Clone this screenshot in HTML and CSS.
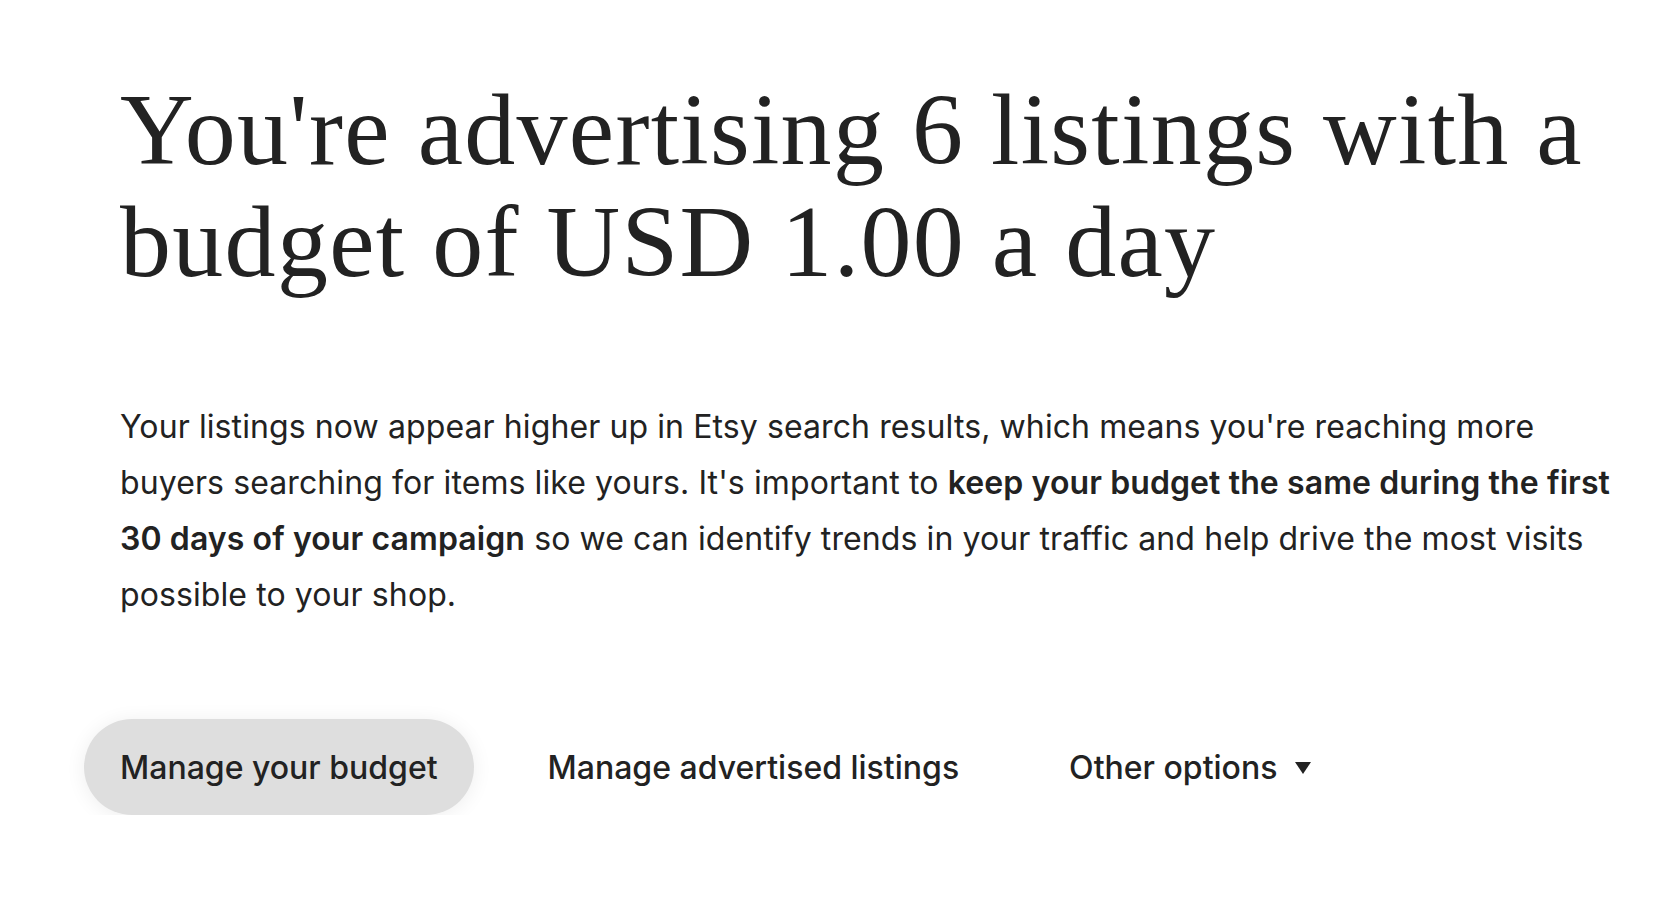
FILE: index.html
```html
<!DOCTYPE html>
<html lang="en">
<head>
<meta charset="utf-8">
<title>Advertising</title>
<link rel="stylesheet" href="styles.css">
</head>
<body>
<main class="page">
  <h1 class="title">You're advertising 6 listings with a budget of USD 1.00 a day</h1>
  <p class="intro">Your listings now appear higher up in Etsy search results, which means you're reaching more buyers searching for items like yours. It's important to <strong>keep your budget the same during the first 30 days of your campaign</strong> so we can identify trends in your traffic and help drive the most visits possible to your shop.</p>
  <div class="actions">
    <button class="btn btn-filled" type="button">Manage your budget</button>
    <button class="btn" type="button">Manage advertised listings</button>
    <button class="btn" type="button">Other options<svg class="caret" width="16" height="12" viewBox="0 0 16 12" aria-hidden="true"><path d="M0 0H16L8 12Z" fill="#222"/></svg></button>
  </div>
</main>
</body>
</html>
```

FILE: styles.css
```css
html, body {
  margin: 0;
  padding: 0;
  background: #ffffff;
  color: #222222;
}

.page {
  padding: 74px 0 0 120px;
  width: 1500px;
}

.title {
  margin: 0;
  font-family: "Liberation Serif", "Times New Roman", serif;
  font-weight: 400;
  font-size: 102px;
  line-height: 112px;
  letter-spacing: 1.3px;
  color: #222222;
}

.intro {
  margin: 101px 0 0 0;
  font-family: "Inter", "Liberation Sans", sans-serif;
  font-size: 32px;
  line-height: 56px;
  letter-spacing: 0.1px;
  color: #222222;
}

.intro strong {
  font-weight: 600;
}

.actions {
  display: flex;
  align-items: center;
  gap: 38px;
  margin: 96px 0 0 -36px;
}

.btn {
  display: inline-flex;
  align-items: center;
  gap: 18px;
  height: 96px;
  padding: 0 36px;
  border: none;
  border-radius: 48px;
  background: transparent;
  font-family: "Inter", "Liberation Sans", sans-serif;
  font-size: 32px;
  font-weight: 500;
  color: #222222;
  cursor: pointer;
}

.btn-filled {
  background: #dedede;
  box-shadow: 0 2px 20px rgba(0, 0, 0, 0.07);
}

.caret {
  display: block;
  margin-top: 2px;
}
```
